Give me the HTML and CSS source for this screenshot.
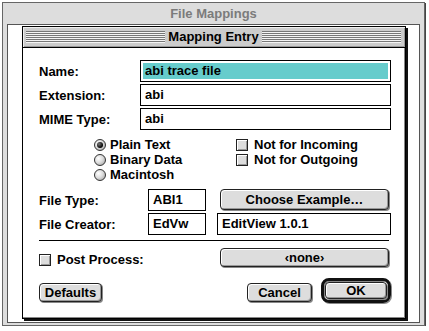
FILE: index.html
```html
<!doctype html>
<html lang="en">
<head>
    <meta charset="UTF-8">
    <title>File Mappings</title>
    <link rel="stylesheet" href="styles.css">
</head>
<body>
    <div class="window">
        <div class="window-title">File Mappings</div>
        <div class="window-body">

            <!-- Mapping Entry dialog -->
            <div class="dialog">
                <div class="dialog-title">
                    <span class="stripes"></span>
                    <span class="dialog-name">Mapping Entry</span>
                    <span class="stripes"></span>
                </div>

                <div class="dialog-body">
                    <div class="fields">
                        <span class="label">Name:</span>
                        <div class="field field-selected"><span class="selection">abi trace file</span></div>
                        <span class="label">Extension:</span>
                        <div class="field">abi</div>
                        <span class="label">MIME Type:</span>
                        <div class="field">abi</div>
                    </div>

                    <div class="options">
                        <div class="radios">
                            <div class="option"><span class="radio checked"></span>Plain Text</div>
                            <div class="option"><span class="radio"></span>Binary Data</div>
                            <div class="option"><span class="radio"></span>Macintosh</div>
                        </div>
                        <div class="checks">
                            <div class="option"><span class="checkbox"></span>Not for Incoming</div>
                            <div class="option"><span class="checkbox"></span>Not for Outgoing</div>
                        </div>
                    </div>

                    <div class="types">
                        <span class="label">File Type:</span>
                        <div class="field">ABI1</div>
                        <button class="button wide">Choose Example…</button>
                        <span class="label">File Creator:</span>
                        <div class="field">EdVw</div>
                        <div class="field">EditView 1.0.1</div>
                    </div>

                    <div class="separator"></div>

                    <div class="post-row">
                        <div class="option post-option"><span class="checkbox"></span>Post Process:</div>
                        <button class="button wide popup">‹none›</button>
                    </div>

                    <div class="buttons">
                        <button class="button defaults">Defaults</button>
                        <button class="button cancel">Cancel</button>
                        <div class="default-ring">
                            <button class="button ok">OK</button>
                        </div>
                    </div>
                </div>
            </div>

        </div>
    </div>
</body>
</html>
```

FILE: styles.css
```css
body {
    margin: 0;
    padding: 0;
    background: #ffffff;
    font-family: "Liberation Sans", Arial, sans-serif;
    font-size: 13px;
    font-weight: bold;
    color: #000;
}

/* Outer (inactive) window */
.window {
    margin: 2px 0 0 2px;
    width: 421px;
    height: 322px;
    border: 1px solid #666;
    box-shadow: 1px 1px 0 #444;
    background: #dddddd;
    display: flex;
    flex-direction: column;
}

.window-title {
    height: 21px;
    line-height: 21px;
    text-align: center;
    color: #7b7b7b;
}

.window-body {
    flex: 1;
    margin: 0 4px 2px 4px;
    border: 1px solid #555;
    background: #fff;
}

/* Movable modal dialog */
.dialog {
    margin: 1px 0 0 14px;
    width: 382px;
    height: 291px;
    border: 1px solid #000;
    background: #fff;
    box-shadow: inset -1px -1px 0 #888, 2px 2px 0 #111;
}

.dialog-title {
    height: 20px;
    border-bottom: 1px solid #000;
    background: #cccccc;
    display: flex;
    align-items: center;
    padding: 0 4px 0 3px;
    box-shadow: inset 1px 1px 0 #eee, inset -1px -1px 0 #999;
}

.stripes {
    flex: 1;
    height: 12px;
    background: repeating-linear-gradient(to bottom, #777 0 1px, #f4f4f4 1px 2px);
}

.dialog-name {
    padding: 0 3px;
    line-height: 20px;
}

.dialog-body {
    padding: 12px 0 0 16px;
}

.label {
    align-self: center;
}

.fields {
    display: grid;
    grid-template-columns: 101px 251px;
    grid-auto-rows: 22px;
    row-gap: 2px;
}

.field {
    box-sizing: border-box;
    height: 22px;
    border: 1px solid #000;
    line-height: 20px;
    padding: 0 4px;
    white-space: nowrap;
    overflow: hidden;
}

.field-selected {
    padding: 2px;
}

.selection {
    display: block;
    height: 16px;
    line-height: 16px;
    padding-left: 2px;
    background: #66cccc;
}

/* Radio buttons and check boxes */
.options {
    display: flex;
    margin: 7px 0 0 55px;
}

.radios {
    width: 142px;
}

.option {
    height: 15px;
    display: flex;
    align-items: center;
}

.radio {
    box-sizing: border-box;
    width: 12px;
    height: 12px;
    margin-right: 4px;
    border: 1px solid #333;
    border-radius: 50%;
    background: radial-gradient(circle at 35% 35%, #fff 0, #ddd 45%, #999 100%);
    position: relative;
}

.radio.checked::after {
    content: "";
    position: absolute;
    left: 2px;
    top: 2px;
    width: 6px;
    height: 6px;
    border-radius: 50%;
    background: radial-gradient(circle at 35% 35%, #777 0, #000 70%);
}

.checkbox {
    box-sizing: border-box;
    width: 12px;
    height: 12px;
    margin-right: 6px;
    border: 1px solid #222;
    background: #dddddd;
    box-shadow: inset 1px 1px 0 #fff, inset -1px -1px 0 #999;
}

/* File type / creator */
.types {
    display: grid;
    grid-template-columns: 98px 58px 174px;
    grid-auto-rows: 22px;
    column-gap: 11px;
    row-gap: 2px;
    margin-top: 7px;
}

.button {
    box-sizing: border-box;
    font: inherit;
    color: #000;
    padding: 0;
    height: 19px;
    border: 1px solid #222;
    border-radius: 4px;
    background: #dddddd;
    box-shadow: inset 1px 1px 0 #fff, inset -1px -1px 0 #999, 1px 1px 0 #888;
    cursor: pointer;
}

.wide {
    width: 169px;
    margin-left: 3px;
}

.types .wide {
    height: 21px;
}

.separator {
    width: 350px;
    height: 1px;
    margin-top: 5px;
    background: #000;
}

.post-row {
    display: flex;
    align-items: flex-end;
    margin-top: 7px;
}

.post-option {
    width: 178px;
}

.popup {
    height: 19px;
}

/* Bottom buttons */
.buttons {
    display: flex;
    align-items: flex-start;
    width: 352px;
    margin-top: 11px;
}

.defaults {
    width: 63px;
    margin-top: 5px;
}

.cancel {
    width: 65px;
    margin: 5px 9px 0 auto;
}

.default-ring {
    box-sizing: border-box;
    width: 70px;
    height: 25px;
    border: 3px solid #111;
    border-radius: 8px;
    padding: 1px;
    box-shadow: inset 1px 1px 0 #888, 1px 1px 0 #888;
}

.ok {
    width: 62px;
    height: 17px;
}
```
